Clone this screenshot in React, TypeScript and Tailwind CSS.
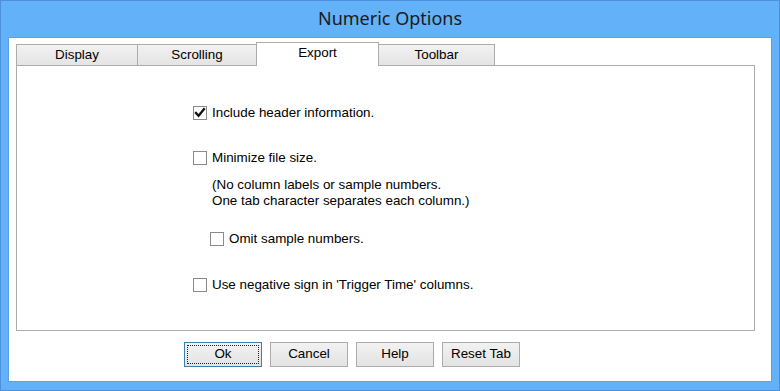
import React from "react";

function Box({ checked = false }: { checked?: boolean }) {
  return (
    <div className="w-[14px] h-[14px] border border-[#8a8a8a] bg-white flex items-center justify-center shrink-0">
      {checked && (
        <svg width="12" height="12" viewBox="0 0 12 12">
          <path d="M2 6 L4.6 8.8 L10 2.2" fill="none" stroke="#111" strokeWidth="2.3" strokeLinecap="square" />
        </svg>
      )}
    </div>
  );
}

function Row({ checked, label, cls }: { checked?: boolean; label: string; cls: string }) {
  return (
    <div className={`flex items-center h-[16px] ${cls}`}>
      <Box checked={checked} />
      <span className="ml-[5px] leading-[16px]">{label}</span>
    </div>
  );
}

function Tab({ label, w, selected, first }: { label: string; w: string; selected?: boolean; first?: boolean }) {
  if (selected) {
    return (
      <div className={`${w} h-[24px] ml-[-1px] relative z-10 bg-white border-t border-l border-r border-[#acacac] flex justify-center pt-[1px] leading-[18px]`}>
        {label}
      </div>
    );
  }
  return (
    <div
      className={`${w} h-[22px] ${first ? "" : "ml-[-1px]"} border border-[#acacac] bg-gradient-to-b from-[#f2f2f2] to-[#e4e4e4] flex justify-center items-center leading-[20px]`}
    >
      {label}
    </div>
  );
}

function Btn({ label, focus }: { label: string; focus?: boolean }) {
  return (
    <div
      className={`w-[78px] h-[25px] border ${focus ? "border-[#3c7fb1]" : "border-[#acacac]"} bg-gradient-to-b from-[#f2f2f2] to-[#e3e3e3] flex items-center justify-center p-[2px]`}
    >
      <div className={`w-full h-full flex items-center justify-center ${focus ? "border border-dotted border-[#222]" : ""}`}>
        {label}
      </div>
    </div>
  );
}

export default function App() {
  return (
    <div
      className="w-[780px] h-[391px] bg-[#63b1f8] border border-[#4c90da] flex flex-col text-[13.4px] text-black"
      style={{ fontFamily: '"Liberation Sans", Arial, sans-serif' }}
    >
      <div
        className="h-[36px] flex items-center justify-center text-[18px] text-[#1b1b1b] pb-[1px]"
        style={{ fontFamily: '"Noto Sans", "Open Sans", sans-serif' }}
      >
        Numeric Options
      </div>
      <div className="mx-[7px] flex-1 mb-[8px] bg-white border border-[#5aa1ea] flex flex-col">
        <div className="pl-[7px] pt-[4px] flex items-end h-[28px]">
          <Tab label="Display" w="w-[122px]" first />
          <Tab label="Scrolling" w="w-[120px]" />
          <Tab label="Export" w="w-[123px]" selected />
          <Tab label="Toolbar" w="w-[117px]" />
        </div>
        <div className="ml-[7px] mt-[-1px] w-[739px] h-[266px] border border-[#acacac] pl-[176px] pt-[39px]">
          <Row checked label="Include header information." cls="" />
          <Row label="Minimize file size." cls="mt-[29px]" />
          <div className="mt-[11px] ml-[19px] leading-[16px]">
            <div>(No column labels or sample numbers.</div>
            <div>One tab character separates each column.)</div>
          </div>
          <Row label="Omit sample numbers." cls="mt-[22px] ml-[17px]" />
          <Row label="Use negative sign in 'Trigger Time' columns." cls="mt-[30px]" />
        </div>
        <div className="mt-[11px] pl-[175px] flex gap-[8px]">
          <Btn label="Ok" focus />
          <Btn label="Cancel" />
          <Btn label="Help" />
          <Btn label="Reset Tab" />
        </div>
      </div>
    </div>
  );
}
